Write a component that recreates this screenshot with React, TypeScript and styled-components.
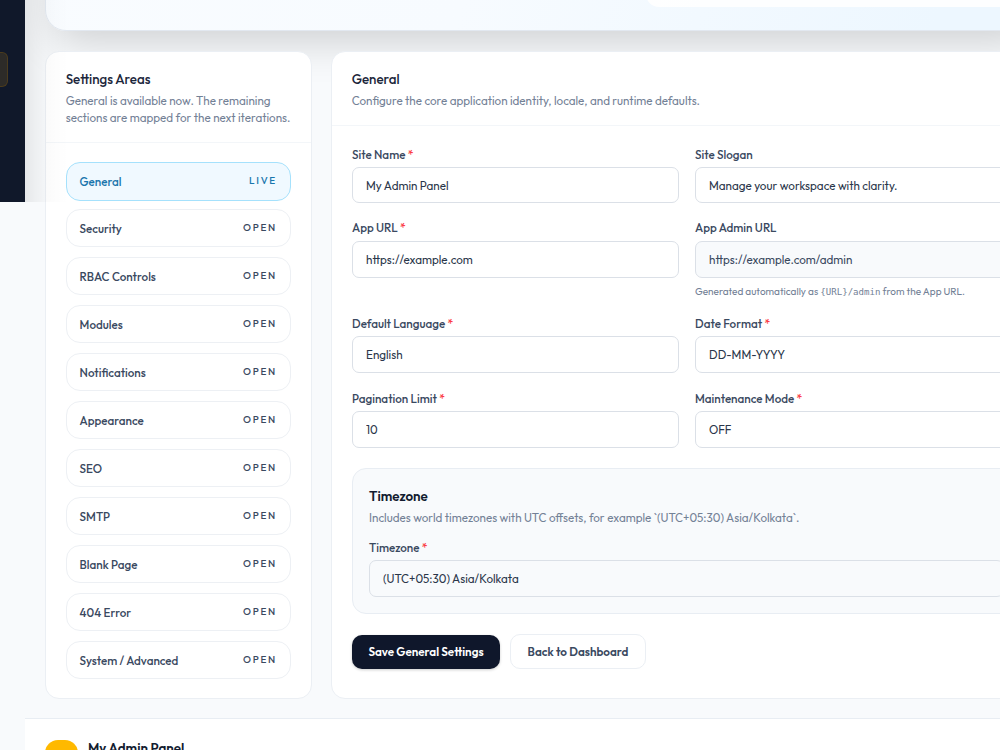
import React from 'react';
import styled, { createGlobalStyle } from "styled-components";

const GlobalStyle = createGlobalStyle`
  * {
    box-sizing: border-box;
  }

  body {
    margin: 0;
    height: 750px;
    overflow: hidden;
    background-color: #f8fafc;
    color: #3a495f;
    font-family: Outfit, Lato, "Liberation Sans", sans-serif;
    font-size: 11.67px;
  }

  h2, h3, p {
    margin: 0;
  }
`

const Shell = styled.div`
  display: flex;
  align-items: flex-start;
  width: 100%;
  height: 750px;
  overflow: hidden;
`

const Sidebar = styled.aside`
  position: relative;
  z-index: 1;
  flex: none;
  width: 25px;
  height: 202px;
  padding-top: 52px;
  background-color: #10182a;

  /* soft edge that falls over the content */
  &::after {
    content: "";
    position: absolute;
    top: 0;
    bottom: 0;
    left: 25px;
    width: 44px;
    pointer-events: none;
    background: linear-gradient(90deg, rgba(0, 0, 0, 0.075), rgba(0, 0, 0, 0.042) 10px, rgba(0, 0, 0, 0.018) 20px, rgba(0, 0, 0, 0.006) 32px, transparent);
  }
`

const ActiveLink = styled.div`
  width: 8px;
  height: 35px;
  border: 1px solid #4b3b1d;
  border-left: 0;
  border-radius: 0 6px 6px 0;
  background-color: #2d2b28;
`

const Main = styled.main`
  flex: none;
  width: 1036px;
`

const Hero = styled.section`
  display: flex;
  justify-content: flex-end;
  align-items: flex-start;
  height: 200px;
  margin: -169px 20px 0;
  padding-right: 18px;
  border: 1px solid #e2e8f0;
  border-radius: 21px;
  background: linear-gradient(110deg, #f9fcff, #f7fbff 45%, #edf7ff 90%);
  box-shadow: 0 21px 42px -10px rgba(0, 0, 0, 0.17);
`

const HeroCard = styled.div`
  width: 376px;
  height: 175px;
  border-radius: 13px;
  background-color: rgba(255, 255, 255, 0.85);
`

const Columns = styled.div`
  display: grid;
  grid-template-columns: 267px 710px;
  gap: 19px;
  height: 647px;
  margin: 20px 20px 0;
`

const Card = styled.section`
  border: 1px solid #ebeff4;
  border-radius: 14px;
  background-color: #fff;
`

const CardHeader = styled.header<{ $height: number }>`
  height: ${({ $height }) => $height}px;
  padding: 16.5px 19.7px 0;
  border-bottom: 1px solid #f3f6f9;

  & h2 {
    font-size: 13.33px;
    font-weight: 500;
    line-height: 20px;
    color: #1b263a;
  }

  & p {
    margin-top: 3px;
    line-height: 17px;
    white-space: nowrap;
    color: #738196;
  }
`

const AreaList = styled.nav`
  display: flex;
  flex-direction: column;
  gap: 10px;
  padding: 19px 20px;
`

const Area = styled.a<{ $active?: boolean }>`
  display: flex;
  align-items: center;
  justify-content: space-between;
  height: ${({ $active }) => ($active ? 39 : 38)}px;
  margin-bottom: ${({ $active }) => ($active ? '-2px' : '0')};
  padding: 0 13px 0 12.6px;
  border: 1px solid ${({ $active }) => ($active ? '#a5e1fc' : '#edf0f4')};
  border-radius: 14px;
  background-color: ${({ $active }) => ($active ? '#f0f9ff' : '#fff')};
  color: ${({ $active }) => ($active ? '#1a76ad' : '#3a495f')};
  font-weight: 500;

  & span {
    margin-top: -2px;
    font-size: 10px;
    font-weight: 500;
    letter-spacing: 1.75px;
  }
`

const Form = styled.form`
  padding: 19.5px 20px;
`

const Fields = styled.div`
  display: grid;
  grid-template-columns: 327px 327px;
  column-gap: 16px;
`

const Field = styled.div<{ $height: number }>`
  height: ${({ $height }) => $height}px;
`

const Label = styled.label`
  display: block;
  height: 21.5px;
  line-height: 17px;
  font-weight: 500;

  & span {
    color: #fb3d47;
  }
`

const Input = styled.input<{ $short?: boolean }>`
  display: block;
  width: 100%;
  height: ${({ $short }) => ($short ? 36 : 37)}px;
  padding: 0 13px;
  border: 1px solid #dbe0e7;
  border-radius: 7px;
  outline: 0;
  background-color: #fff;
  color: #2a364a;
  font: inherit;

  &:read-only {
    background-color: #f8fafc;
    color: #3a495f;
  }
`

const Help = styled.p`
  padding-top: 5px;
  font-size: 10px;
  line-height: 17px;
  white-space: nowrap;
  color: #738196;

  & code {
    font-family: "DejaVu Sans Mono", monospace;
    font-size: 9.1px;
  }
`

const TimezoneBox = styled.div`
  width: 669px;
  height: 146px;
  padding: 16.5px 16px;
  border: 1px solid #e8edf3;
  border-radius: 14px;
  background-color: #f8fafc;

  & h3 {
    font-size: 13.33px;
    font-weight: 600;
    line-height: 20px;
    color: #131c30;
  }

  & p {
    margin: 3px 0 13px;
    line-height: 17px;
    color: #738196;
  }

  ${Input} {
    background-color: #f8fafc;
  }
`

const Actions = styled.div`
  display: flex;
  align-items: center;
  gap: 10px;
  padding-top: 20px;
`

const Button = styled.button<{ $primary?: boolean }>`
  width: ${({ $primary }) => ($primary ? 148 : 136)}px;
  height: ${({ $primary }) => ($primary ? 34 : 35)}px;
  padding: 0;
  border: ${({ $primary }) => ($primary ? '0' : '1px solid #ebeff4')};
  border-radius: 10px;
  background-color: ${({ $primary }) => ($primary ? '#0f172b' : '#fff')};
  color: ${({ $primary }) => ($primary ? '#fff' : '#3a495f')};
  box-shadow: ${({ $primary }) => ($primary ? '0 1px 3px rgba(0, 0, 0, 0.2)' : 'none')};
  font: inherit;
  font-weight: 600;
`

const Footer = styled.footer`
  display: flex;
  gap: 10px;
  height: 60px;
  margin-top: 20px;
  padding: 21px 20px;
  border-top: 1px solid #e8edf3;
  background-color: #fff;
  color: #131c30;
  font-size: 13.33px;
  font-weight: 600;
  line-height: 17px;
`

const Logo = styled.div`
  width: 33px;
  height: 33px;
  border-radius: 13px;
  background-color: #ffb900;
`

const areas = [
    'Security', 'RBAC Controls', 'Modules', 'Notifications', 'Appearance',
    'SEO', 'SMTP', 'Blank Page', '404 Error', 'System / Advanced',
];

type TextFieldProps = {
    label: string;
    value: string;
    height: number;
    required?: boolean;
    readOnly?: boolean;
    short?: boolean;
    children?: React.ReactNode;
};

const TextField = ({ label, value, height, required, readOnly, short, children }: TextFieldProps) => (
    <Field $height={height}>
        <Label>{label} {required && <span>*</span>}</Label>
        <Input defaultValue={value} readOnly={readOnly} $short={short} />
        {children}
    </Field>
);

const App = () => {
    return (
        <Shell>
            <GlobalStyle />
            <Sidebar>
                <ActiveLink />
            </Sidebar>
            <Main>
                <Hero>
                    <HeroCard />
                </Hero>
                <Columns>
                    <Card>
                        <CardHeader $height={91}>
                            <h2>Settings Areas</h2>
                            <p>General is available now. The remaining<br />sections are mapped for the next iterations.</p>
                        </CardHeader>
                        <AreaList>
                            <Area $active>General<span>LIVE</span></Area>
                            {areas.map((area) => (
                                <Area key={area}>{area}<span>OPEN</span></Area>
                            ))}
                        </AreaList>
                    </Card>
                    <Card>
                        <CardHeader $height={74}>
                            <h2>General</h2>
                            <p>Configure the core application identity, locale, and runtime defaults.</p>
                        </CardHeader>
                        <Form>
                            <Fields>
                                <TextField label="Site Name" value="My Admin Panel" height={73.5} required short />
                                <TextField label="Site Slogan" value="Manage your workspace with clarity." height={73.5} short />
                                <TextField label="App URL" value="https://example.com" height={95.5} required />
                                <TextField label="App Admin URL" value="https://example.com/admin" height={95.5} readOnly>
                                    <Help>Generated automatically as <code>{'{URL}/admin'}</code> from the App URL.</Help>
                                </TextField>
                                <TextField label="Default Language" value="English" height={75} required />
                                <TextField label="Date Format" value="DD-MM-YYYY" height={75} required />
                                <TextField label="Pagination Limit" value="10" height={78.5} required />
                                <TextField label="Maintenance Mode" value="OFF" height={78.5} required />
                            </Fields>
                            <TimezoneBox>
                                <h3>Timezone</h3>
                                <p>Includes world timezones with UTC offsets, for example `(UTC+05:30) Asia/Kolkata`.</p>
                                <TextField label="Timezone" value="(UTC+05:30) Asia/Kolkata" height={60} required />
                            </TimezoneBox>
                            <Actions>
                                <Button type="button" $primary>Save General Settings</Button>
                                <Button type="button">Back to Dashboard</Button>
                            </Actions>
                        </Form>
                    </Card>
                </Columns>
                <Footer>
                    <Logo />
                    My Admin Panel
                </Footer>
            </Main>
        </Shell>
    );
};

export default App;
